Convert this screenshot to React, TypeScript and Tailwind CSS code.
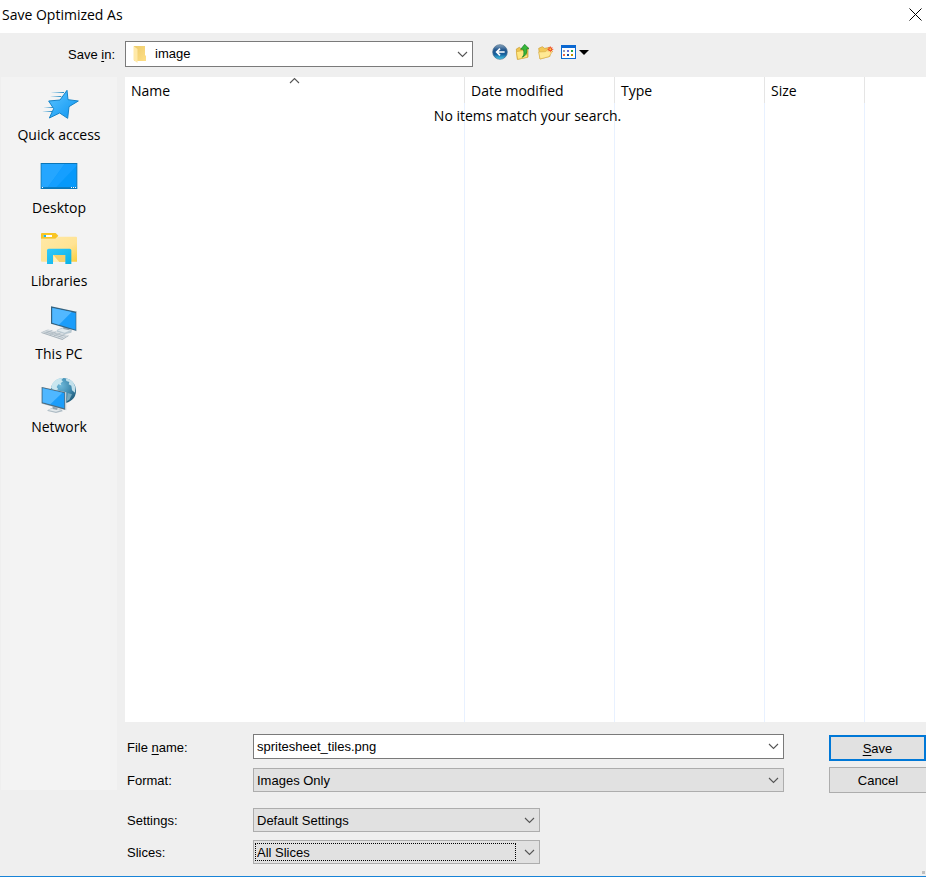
import type { ReactNode } from "react";
import { clsx } from "clsx";

function QuickAccessIcon() {
  return (
    <svg viewBox="114 12 126 120" className="h-10 w-[42px]" aria-hidden="true">
      <defs>
        <linearGradient id="star" x1="0" y1="0" x2="1" y2="1">
          <stop offset="0" stopColor="#5cc4ff" />
          <stop offset="1" stopColor="#0a94f2" />
        </linearGradient>
        <linearGradient id="trail" x1="0" y1="0" x2="1" y2="0">
          <stop offset="0" stopColor="#2f9bd8" stopOpacity="0.1" />
          <stop offset="1" stopColor="#2386bd" />
        </linearGradient>
      </defs>
      <g fill="url(#trail)">
        <rect x="154" y="36" width="38" height="3" />
        <rect x="152" y="48" width="32" height="3" />
        <rect x="132" y="81" width="28" height="3" />
        <rect x="128" y="93" width="28" height="3" />
      </g>
      <path
        d="M201 31 L204 59 L235 63 L207 80 L203 115 L179 99 L148 114 L161 86 L146 63 L180 60 Z"
        fill="url(#star)"
        stroke="#1583c8"
        strokeWidth="3"
        strokeLinejoin="round"
      />
    </svg>
  );
}

function DesktopIcon() {
  return (
    <svg viewBox="114 231 126 120" className="h-10 w-[42px]" aria-hidden="true">
      <rect x="123.500" y="250.500" width="107" height="75" fill="#0699fb" stroke="#0a76b8" strokeWidth="3" />
      <path d="M125 252 H194 L144 321 H125 Z" fill="#25a6ff" />
      <path d="M194 252 H229 V258 L169 321 H144 Z" fill="#159fff" />
      <rect x="125" y="321" width="104" height="3" fill="#0a7cc4" />
      <path d="M126 321h3v3h-3z M213 321h3v3h-3z M219 321h3v3h-3z M225 321h3v3h-3z" fill="#fff" />
    </svg>
  );
}

function LibrariesIcon() {
  return (
    <svg viewBox="114 30 126 120" className="h-10 w-[42px]" aria-hidden="true">
      <defs>
        <linearGradient id="folder" x1="0" y1="0" x2="1" y2="1">
          <stop offset="0" stopColor="#ffe9a6" />
          <stop offset="0.6" stopColor="#ffe394" />
          <stop offset="1" stopColor="#fbcf3d" />
        </linearGradient>
        <linearGradient id="stand" x1="0" y1="0" x2="1" y2="1">
          <stop offset="0" stopColor="#33c9fa" />
          <stop offset="1" stopColor="#08b2e8" />
        </linearGradient>
      </defs>
      <path d="M123 42 q0 -3 3 -3 H167 L175 47 L167 56 H123 Z" fill="#f9c523" />
      <path d="M123 57 H166 L174 50 H228 q3 0 3 3 V125 H126 q-3 0 -3 -3 Z" fill="url(#folder)" />
      <rect x="131" y="45" width="25" height="6" fill="#fff" />
      <rect x="131" y="45" width="7" height="6" fill="#1bb6ec" />
      <path d="M160 105 H196 V126 H160 Z" fill="#f6d06b" />
      <path d="M160 105 L178 126 H160 Z" fill="#fff0bb" />
      <path d="M141 91 q0 -5 5 -5 H209 q5 0 5 5 V132 H196 V105 H159 V132 H141 Z" fill="url(#stand)" />
    </svg>
  );
}

function ThisPcIcon() {
  return (
    <svg viewBox="114 249 126 120" className="h-10 w-[42px]" aria-hidden="true">
      <path d="M170 330 L189 322 L216 329 L214 338 L194 343 L171 335 Z" fill="#b9c8d1" />
      <path d="M172 331 L190 325 L211 331 L194 338 Z" fill="#e1e9ed" />
      <path d="M190 316 L208 321 V331 L190 327 Z" fill="#93a5b1" />
      <path d="M153 259 L230 275 V333 L153 311 Z" fill="#35627f" />
      <path d="M157 264 L227 279 V329 L157 308 Z" fill="#1b9dfa" />
      <path d="M157 264 L215 276 L177 314 L157 308 Z" fill="#52b8ff" />
      <path d="M228 274 L231 276 V334 L228 333 Z" fill="#b7c5cd" />
      <path d="M122 338 L144 329 L207 347 L187 360 Z" fill="#a5b0b8" />
      <path d="M123 336 L144 328 L206 346 L187 357 Z" fill="#d9dfe3" />
      <path
        d="M130 335 L190 353 M137 332 L197 349 M137 340 L157 331 M149 344 L169 335 M162 347 L182 339 M175 351 L194 343"
        stroke="#a3b0b9"
        strokeWidth="2"
      />
    </svg>
  );
}

function NetworkIcon() {
  return (
    <svg viewBox="114 48 126 120" className="h-10 w-[42px]" aria-hidden="true">
      <defs>
        <radialGradient id="globe" cx="0.4" cy="0.3" r="0.7">
          <stop offset="0" stopColor="#6fb9da" />
          <stop offset="0.6" stopColor="#3d88ad" />
          <stop offset="1" stopColor="#23607f" />
        </radialGradient>
      </defs>
      <circle cx="190" cy="92" r="38" fill="url(#globe)" />
      <path
        d="M153 83 Q157 62 178 55 L190 54 L184 60 L189 64 L182 70 L184 76 L175 73 L170 81 L175 88 L164 92 Z"
        fill="#c9e6ef"
      />
      <path d="M197 55 Q214 58 222 71 L226 82 L225 98 L216 91 L214 77 L206 73 L208 66 L199 63 Z" fill="#c2e0eb" />
      <path d="M203 99 L216 103 L208 119 L200 124 Z" fill="#76a9bf" />
      <path d="M142 151 L160 142 L186 149 L188 154 L168 159 L143 153 Z" fill="#aebcc5" />
      <path d="M144 150 L160 144 L184 150 L168 155 Z" fill="#e2e8eb" />
      <path d="M158 138 L172 142 V150 L158 147 Z" fill="#90a2ae" />
      <path d="M125 81 L199 97 V151 L125 131 Z" fill="#c3ced5" />
      <path d="M125 81 L195 97 V149 L125 130 Z" fill="#4f6d7f" />
      <path d="M128 85 L193 99 V145 L128 127 Z" fill="#1b9dfa" />
      <path d="M128 85 L187 98 L151 133 L128 127 Z" fill="#4fb7ff" />
    </svg>
  );
}

function BackIcon() {
  return (
    <svg viewBox="157 42 48 48" className="size-4" aria-hidden="true">
      <defs>
        <linearGradient id="ball" x1="0" y1="0" x2="0" y2="1">
          <stop offset="0" stopColor="#8aa5bd" />
          <stop offset="0.35" stopColor="#24588e" />
          <stop offset="0.65" stopColor="#165e9c" />
          <stop offset="1" stopColor="#45d0ee" />
        </linearGradient>
      </defs>
      <circle cx="181" cy="66" r="22" fill="url(#ball)" stroke="#456b8c" strokeWidth="2" />
      <path d="M195 66 H171 M181 56 L171 66 L181 76" fill="none" stroke="#fff" strokeWidth="5" />
    </svg>
  );
}

function UpIcon() {
  return (
    <svg viewBox="225 42 48 48" className="size-4" aria-hidden="true">
      <path d="M229 57 L238 52 L243 56 L264 52 V81 L232 88 Z" fill="#efc54f" stroke="#c6982f" strokeWidth="2" />
      <path d="M229 65 L257 60 L263 82 L233 88 Z" fill="#ffe680" stroke="#d6aa3c" strokeWidth="2" />
      <path
        d="M246 82 Q255 76 250 58 H242 L254 43 L267 56 L260 57 Q263 76 246 82 Z"
        fill="#35b63b"
        stroke="#147d22"
        strokeWidth="2"
      />
    </svg>
  );
}

function NewFolderIcon() {
  return (
    <svg viewBox="296 42 48 48" className="size-4" aria-hidden="true">
      <path d="M298 55 L309 50 L316 55 L332 52 V79 L302 87 Z" fill="#f2c957" stroke="#cfa038" strokeWidth="2" />
      <path d="M298 66 L318 65 L325 60 L340 63 L329 80 L302 87 Z" fill="#ffe994" stroke="#dab04b" strokeWidth="2" />
      <path d="M333 49 V67 M324 58 H342 M327 52 L339 64 M339 52 L327 64" stroke="#f2704a" strokeWidth="3" />
      <circle cx="333" cy="58" r="6" fill="#ee4a22" />
      <circle cx="333" cy="58" r="3" fill="#ffc552" />
    </svg>
  );
}

function ViewIcon() {
  return (
    <svg viewBox="0 0 28 16" className="h-4 w-7" aria-hidden="true">
      <rect x="0.500" y="1.500" width="14" height="13" fill="#fff" stroke="#0b68d1" />
      <rect x="0" y="1" width="15" height="3" fill="#0b68d1" />
      <path d="M2 6h2v2h-2z" fill="#9a9ab0" />
      <path d="M6 6h2v2h-2z" fill="#6b6bd8" />
      <path d="M10 6h2v2h-2z" fill="#25a243" />
      <path d="M2 10h2v2h-2z" fill="#ef6847" />
      <path d="M6 10h2v2h-2z" fill="#164ca4" />
      <path d="M10 10h2v2h-2z" fill="#c49300" />
      <path d="M18 6 H28 L23 11 Z" fill="#000" />
    </svg>
  );
}

function FolderIcon() {
  return (
    <svg viewBox="0 0 13 18" className="h-[18px] w-[13px]" aria-hidden="true">
      <defs>
        <linearGradient id="small-folder" x1="0" y1="0" x2="1" y2="1">
          <stop offset="0" stopColor="#eccb6b" />
          <stop offset="1" stopColor="#ffdf87" />
        </linearGradient>
      </defs>
      <path d="M1 1 H12 V10 L13 11 V16 H1 Z" fill="url(#small-folder)" />
      <path d="M0.500 1 L4.500 4 V18 L0.500 15 Z" fill="#ffe9a8" />
    </svg>
  );
}

function Chevron({ className }: { className?: string }) {
  return (
    <svg viewBox="0 0 11 7" className={clsx("h-[7px] w-[11px]", className)} aria-hidden="true">
      <path d="M1 1 L5.500 5.500 L10 1" fill="none" stroke="#555" strokeWidth="1.1" />
    </svg>
  );
}

const places = [
  { title: "Quick access", icon: QuickAccessIcon },
  { title: "Desktop", icon: DesktopIcon },
  { title: "Libraries", icon: LibrariesIcon },
  { title: "This PC", icon: ThisPcIcon },
  { title: "Network", icon: NetworkIcon },
];

const tools = [
  { title: "Back", icon: BackIcon },
  { title: "Up one level", icon: UpIcon },
  { title: "Create new folder", icon: NewFolderIcon },
  { title: "View menu", icon: ViewIcon },
];

const columns = [
  { title: "Name", width: "w-[340px]" },
  { title: "Date modified", width: "w-[150px]" },
  { title: "Type", width: "w-[150px]" },
  { title: "Size", width: "w-[100px]" },
];

function Field({ id, label, children }: { id: string; label: ReactNode; children: ReactNode }) {
  return (
    <div className="flex items-center">
      <label htmlFor={id} className="w-32 shrink-0 pt-0.5 pl-0.5">
        {label}
      </label>
      {children}
    </div>
  );
}

function Dropdown({
  id,
  value,
  className,
  focused,
}: {
  id: string;
  value: string;
  className: string;
  focused?: boolean;
}) {
  return (
    <div className={clsx("relative", className)}>
      <select
        id={id}
        className="block h-6 w-full appearance-none border border-[#adadad] bg-[#e1e1e1] pt-0.5 pl-[3px] outline-none"
      >
        <option>{value}</option>
      </select>
      {focused && (
        <span className="pointer-events-none absolute top-[3px] right-6 bottom-[3px] left-0.5 border border-dotted border-black" />
      )}
      <Chevron className="pointer-events-none absolute top-[9px] right-[5px]" />
    </div>
  );
}

export default function App() {
  return (
    <div className="relative flex min-h-screen flex-col border-b border-[#1883d7] bg-[#efefef] font-['Liberation_Sans',sans-serif] text-[13px] text-black">
      <header className="flex h-[33px] items-center justify-between bg-white pr-1 pl-0.5 font-['Open_Sans',sans-serif]">
        <h1 className="pb-1 text-sm">Save Optimized As</h1>
        <button aria-label="Close" className="pb-1">
          <svg viewBox="0 0 13 13" className="size-[13px]" aria-hidden="true">
            <path d="M0.500 0.500 L12.500 12.500 M12.500 0.500 L0.500 12.500" stroke="#000" />
          </svg>
        </button>
      </header>

      <div className="flex h-11 items-center pb-0.5">
        <label htmlFor="save-in" className="w-[125px] pt-0.5 pr-2.5 text-right">
          Save <u className="underline-offset-2">i</u>n:
        </label>
        <div className="relative w-[348px]">
          <select
            id="save-in"
            className="block h-[26px] w-full appearance-none border border-[#7a7a7a] bg-white pl-[29px] outline-none"
          >
            <option>image</option>
          </select>
          <span className="pointer-events-none absolute top-1 left-2">
            <FolderIcon />
          </span>
          <Chevron className="pointer-events-none absolute top-2.5 right-[5px]" />
        </div>
        <div className="flex gap-[7px] pb-1 pl-[19px]">
          {tools.map((tool) => (
            <button key={tool.title} aria-label={tool.title}>
              <tool.icon />
            </button>
          ))}
        </div>
      </div>

      <div className="flex flex-1">
        <nav className="mr-2 mb-[86px] ml-px w-[116px] shrink-0 bg-[#f3f3f3] pt-[7px] font-['Open_Sans',sans-serif] text-sm">
          {places.map((place) => (
            <a key={place.title} href="#" className="flex h-[73px] flex-col items-center gap-px">
              <place.icon />
              <span>{place.title}</span>
            </a>
          ))}
        </nav>

        <main className="flex min-w-0 flex-1 flex-col">
          <div className="relative grid flex-1 overflow-hidden bg-white font-['Open_Sans',sans-serif] text-sm">
            <table className="w-full table-fixed border-separate border-spacing-0">
              <thead>
                <tr className="h-[26px]">
                  {columns.map((column) => (
                    <th
                      key={column.title}
                      className={clsx(
                        "relative border-r border-[#e5e5e5] pt-0.5 pl-1.5 text-left font-normal",
                        column.width,
                      )}
                    >
                      {column.title}
                      {column.title === "Name" && (
                        <Chevron className="absolute inset-x-0 top-0 mx-auto rotate-180" />
                      )}
                    </th>
                  ))}
                  <th />
                </tr>
              </thead>
              <tbody>
                <tr>
                  {columns.map((column) => (
                    <td key={column.title} className="border-r border-[#e8f1ff]" />
                  ))}
                  <td />
                </tr>
              </tbody>
            </table>
            <p className="absolute inset-x-0 top-[29px] pl-1 text-center">No items match your search.</p>
          </div>

          <form className="flex justify-between gap-[45px] pt-3 pb-3">
            <div className="min-w-0 flex-1">
              <Field
                id="file-name"
                label={
                  <>
                    File <u className="underline-offset-2">n</u>ame:
                  </>
                }
              >
                <div className="relative flex-1">
                  <input
                    id="file-name"
                    type="text"
                    defaultValue="spritesheet_tiles.png"
                    className="block h-[25px] w-full border border-[#7a7a7a] bg-white pl-[3px] outline-none"
                  />
                  <button type="button" aria-label="Recent names" className="absolute top-[9px] right-[5px]">
                    <Chevron />
                  </button>
                </div>
              </Field>
              <div className="mt-[9px]">
                <Field id="format" label="Format:">
                  <Dropdown id="format" value="Images Only" className="flex-1" />
                </Field>
              </div>
              <div className="mt-4">
                <Field id="settings" label="Settings:">
                  <Dropdown id="settings" value="Default Settings" className="w-[287px]" />
                </Field>
              </div>
              <div className="mt-2">
                <Field id="slices" label="Slices:">
                  <Dropdown id="slices" value="All Slices" className="w-[287px]" focused />
                </Field>
              </div>
            </div>
            <div className="flex w-[97px] flex-col gap-1.5 pt-px">
              <button type="button" className="h-[26px] border-2 border-[#0078d7] bg-[#e1e1e1] pt-0.5">
                <u className="underline-offset-2">S</u>ave
              </button>
              <button type="button" className="h-[26px] border border-r-0 border-[#adadad] bg-[#e1e1e1] pt-0.5">
                Cancel
              </button>
            </div>
          </form>
        </main>
      </div>
      <span className="absolute right-px bottom-0.5 size-[3px] bg-[#bfbfbf]" />
    </div>
  );
}
